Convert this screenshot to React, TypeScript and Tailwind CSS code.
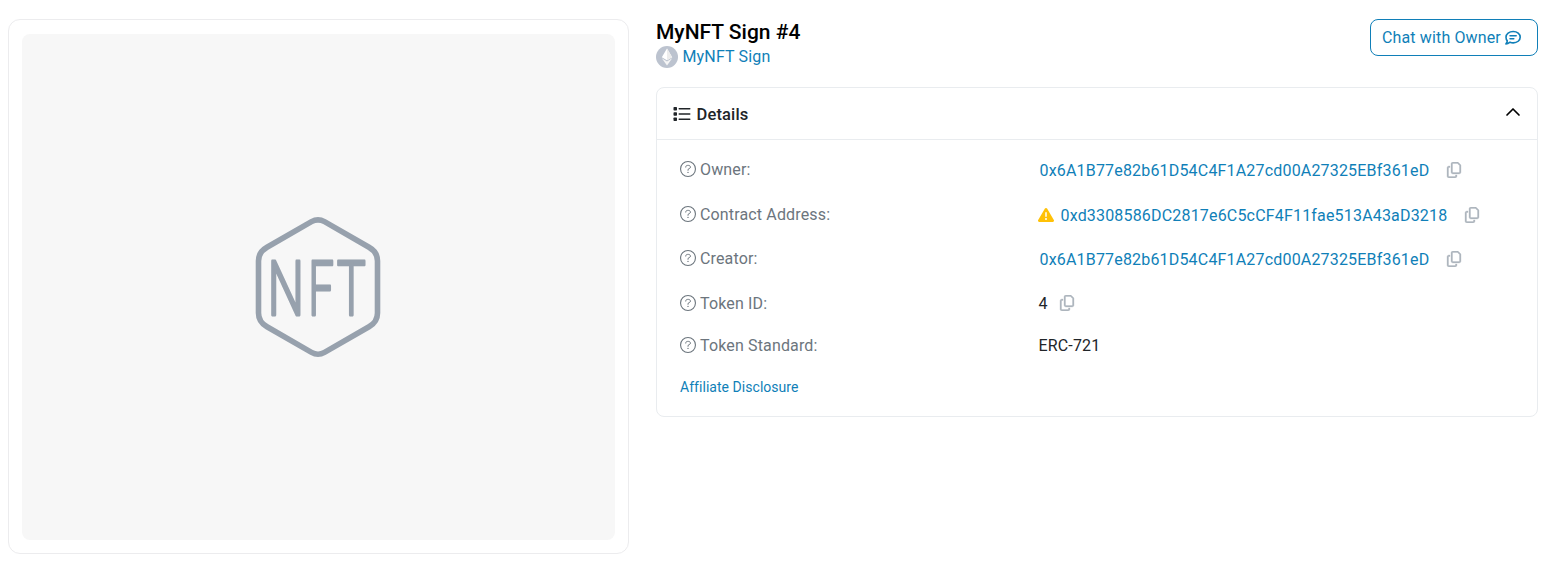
import React from "react";
import { FaRegCopy, FaTriangleExclamation } from "react-icons/fa6";

function NftPlaceholder() {
  return (
    <svg width="130" height="144" viewBox="0 0 130 144" className="text-[#97a1ad]">
      <path
        d="M58.500 5.600Q65 2 71.500 5.600L116 31.200Q124.500 36 124.500 45V97Q124.500 106 116 110.800L71.500 136.400Q65 140 58.500 136.400L14 110.800Q5.500 106 5.500 97V45Q5.500 36 14 31.200Z"
        transform="translate(-1 1)"
        fill="none"
        stroke="currentColor"
        strokeWidth="5.600"
        strokeLinejoin="round"
      />
      <g
        fill="currentColor"
        stroke="currentColor"
        strokeWidth="2.800"
        strokeLinejoin="round"
        fontFamily="Roboto, sans-serif"
        fontSize="76"
        fontWeight="300"
      >
        <text transform="translate(13.400 99.500) scale(0.680 1)">N</text>
        <text transform="translate(54.300 99.500) scale(0.600 1)">F</text>
        <text transform="translate(82.800 99.500) scale(0.640 1)">T</text>
      </g>
    </svg>
  );
}

function EthereumBadge() {
  return (
    <svg width="22" height="22" viewBox="0 0 22 22">
      <circle cx="11" cy="11" r="11" fill="#bcc3cf" />
      <path d="M11 2.500L5.800 11.200L11 14.300L16.200 11.200Z" fill="#fff" />
      <path d="M11 2.500L16.200 11.200L11 14.300Z" fill="#ececec" />
      <path d="M5.800 12.300L11 19.500L16.200 12.300L11 15.400Z" fill="#f5f5f5" />
    </svg>
  );
}

function ListIcon() {
  return (
    <svg width="18" height="16" viewBox="0 0 18 16" fill="#212529">
      <rect x="0.500" y="1" width="3.500" height="3.500" rx="0.700" />
      <rect x="0.500" y="6.300" width="3.500" height="3.500" rx="0.700" />
      <rect x="0.500" y="11.500" width="3.500" height="3.500" rx="0.700" />
      <rect x="5.500" y="2" width="12" height="1.500" rx="0.700" />
      <rect x="5.500" y="7.300" width="12" height="1.500" rx="0.700" />
      <rect x="5.500" y="12.500" width="12" height="1.500" rx="0.700" />
    </svg>
  );
}

function QuestionIcon() {
  return (
    <svg width="16" height="16" viewBox="0 0 16 16" fill="none" stroke="currentColor" strokeLinecap="round" strokeLinejoin="round">
      <circle cx="8" cy="8" r="7.450" strokeWidth="1.100" />
      <path d="M5.700 6.100C5.700 5 6.500 4.400 7.500 4.400H8.600C9.600 4.400 10.400 5.100 10.400 6.100C10.400 6.800 10 7.300 9.400 7.600L8 8.400V9.300" strokeWidth="1" />
      <circle cx="8" cy="11.400" r="0.700" fill="currentColor" stroke="none" />
    </svg>
  );
}

function ChatIcon() {
  return (
    <svg
      width="16"
      height="16"
      viewBox="0 0 16 16"
      fill="none"
      stroke="currentColor"
      strokeWidth="1.600"
      strokeLinecap="round"
      strokeLinejoin="round"
    >
      <path d="M8.200 1.500C12.200 1.500 15.200 4 15.200 7.200S12.200 12.900 8.200 12.900C7 12.900 5.900 12.600 5 12.200C3.700 13.300 2.300 14 0.900 14C1.700 13 2.200 12 2.300 10.900C1.500 10 1 8.600 1 7.200C1 4 4.200 1.500 8.200 1.500Z" />
      <path d="M5 5.800H11.200M5 8.700H8.800" strokeWidth="1.500" />
    </svg>
  );
}

function Row({ label, className, children }: { label: string; className: string; children: React.ReactNode }) {
  return (
    <div className={`flex items-center ${className}`}>
      <div className="flex w-[358.500px] shrink-0 items-center gap-1 tracking-[0.15px] text-[#6c757d]">
        <span className="-mt-0.5">
          <QuestionIcon />
        </span>
        <span>{label}</span>
      </div>
      <div className="flex items-center text-[#212529]">{children}</div>
    </div>
  );
}

function CopyButton({ className }: { className: string }) {
  return (
    <button aria-label="Copy" className={`text-[#adb5bd] ${className}`}>
      <FaRegCopy size={16} stroke="currentColor" strokeWidth={10} />
    </button>
  );
}

function Address({ value }: { value: string }) {
  return (
    <>
      <a className="relative top-px tracking-[0.18px] text-[#107fb8]">{value}</a>
      <CopyButton className="ml-[16.500px]" />
    </>
  );
}

export default function App() {
  return (
    <main className="flex h-[566px] w-[1566px] items-start bg-white pl-2 pt-[19px] font-[Roboto,sans-serif] text-base leading-6">
      <section className="mr-[27px] h-[535px] w-[621px] shrink-0 rounded-xl border border-[#ececee] p-[13px] pt-[14px]">
        <div className="flex h-[506px] w-[593px] items-center justify-center rounded-lg bg-[#f7f7f7]">
          <NftPlaceholder />
        </div>
      </section>
      <section className="w-[882px]">
        <header className="flex items-start justify-between">
          <div>
            <h1 className="text-[21px] font-medium leading-[26px] text-black">MyNFT Sign #4</h1>
            <div className="flex items-center gap-[4.500px] text-[#107fb8]">
              <EthereumBadge />
              <a className="tracking-[0.15px]">MyNFT Sign</a>
            </div>
          </div>
          <button className="flex h-[37px] w-[168px] items-center gap-1 rounded-lg border border-[#107fb8] pl-[11px] text-[#107fb8]">
            <span className="tracking-[0.14px]">Chat with Owner</span>
            <span>
              <ChatIcon />
            </span>
          </button>
        </header>
        <div className="mt-[18px] h-[330px] rounded-lg border border-[#e9ecef]">
          <div className="flex h-[52px] items-center border-b border-[#e9ecef] pl-4 pr-4">
            <ListIcon />
            <h2 className="ml-[5.500px] mt-0.5 text-[16.500px] font-medium tracking-[0.15px] text-[#212529]">Details</h2>
            <svg className="-mt-1 ml-auto" width="16" height="16" viewBox="0 0 16 16" fill="none" stroke="#000" strokeWidth="1.700" strokeLinecap="round" strokeLinejoin="round">
              <path d="M2 11L8 5L14 11" />
            </svg>
          </div>
          <div className="pl-[23px] pt-[17px]">
            <Row label="Owner:" className="h-[26px]">
              <span className="w-px" />
              <Address value="0x6A1B77e82b61D54C4F1A27cd00A27325EBf361eD" />
            </Row>
            <Row label="Contract Address:" className="mt-[19px] h-[26px]">
              <FaTriangleExclamation size={16} className="-ml-[0.500px] mr-[6.500px] text-[#ffc107]" />
              <Address value="0xd3308586DC2817e6C5cCF4F11fae513A43aD3218" />
            </Row>
            <Row label="Creator:" className="mt-[18px] h-[26px]">
              <span className="w-px" />
              <Address value="0x6A1B77e82b61D54C4F1A27cd00A27325EBf361eD" />
            </Row>
            <Row label="Token ID:" className="mt-[19px] h-[26px]">
              <span>4</span>
              <span className="-mt-0.5 ml-[11.500px] flex">
                <CopyButton className="" />
              </span>
            </Row>
            <Row label="Token Standard:" className="mt-4 h-[26px]">
              <span className="tracking-[0.15px]">ERC-721</span>
            </Row>
            <a className="mt-[17px] block text-sm leading-[22px] tracking-[0.04px] text-[#107fb8]">Affiliate Disclosure</a>
          </div>
        </div>
      </section>
    </main>
  );
}
